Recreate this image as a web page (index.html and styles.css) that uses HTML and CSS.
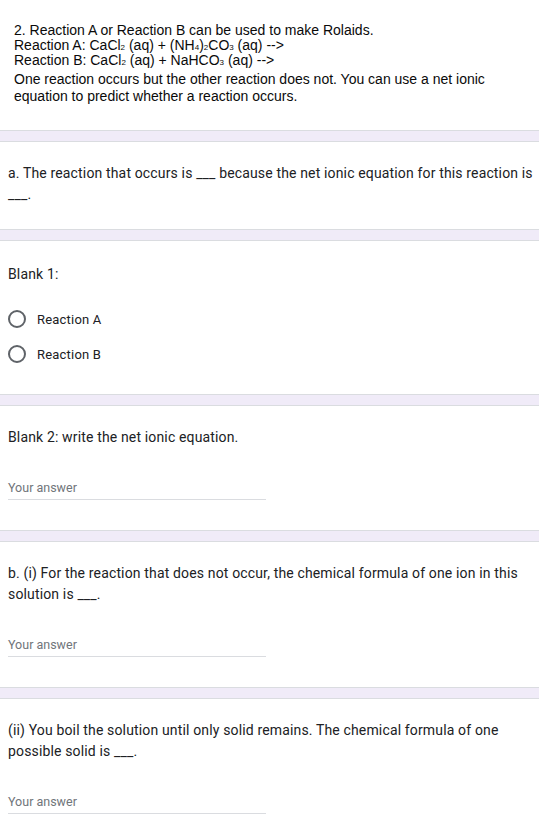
FILE: index.html
```html
<!DOCTYPE html>
<html lang="en">
<head>
<meta charset="utf-8">
<title>Reaction question</title>
<link rel="stylesheet" href="styles.css">
</head>
<body>
<div class="image-block">
  <div class="eqs">
    <div>2. Reaction A or Reaction B can be used to make Rolaids.</div>
    <div>Reaction A: CaCl<sub>2</sub> (aq) + (NH<sub>4</sub>)<sub>2</sub>CO<sub>3</sub> (aq) --&gt;</div>
    <div>Reaction B: CaCl<sub>2</sub> (aq) + NaHCO<sub>3</sub> (aq) --&gt;</div>
  </div>
  <p class="note">One reaction occurs but the other reaction does not. You can use a net ionic equation to predict whether a reaction occurs.</p>
</div>
<div class="sep"></div>
<div class="card">
  <div class="q">a. The reaction that occurs is ___ because the net ionic equation for this reaction is ___.</div>
</div>
<div class="sep"></div>
<div class="card card-radio">
  <div class="q">Blank 1:</div>
  <div class="options">
    <label class="opt"><span class="radio"></span><span class="opt-label">Reaction A</span></label>
    <label class="opt"><span class="radio"></span><span class="opt-label">Reaction B</span></label>
  </div>
</div>
<div class="sep"></div>
<div class="card">
  <div class="q">Blank 2: write the net ionic equation.</div>
  <div class="answer">Your answer</div>
</div>
<div class="sep"></div>
<div class="card">
  <div class="q">b. (i) For the reaction that does not occur, the chemical formula of one ion in this solution is ___.</div>
  <div class="answer">Your answer</div>
</div>
<div class="sep"></div>
<div class="card">
  <div class="q">(ii) You boil the solution until only solid remains. The chemical formula of one possible solid is ___.</div>
  <div class="answer">Your answer</div>
</div>
</body>
</html>
```
FILE: styles.css
```css
html, body {
  margin: 0;
  padding: 0;
  background: #ffffff;
}
body {
  font-family: Roboto, "Liberation Sans", Arial, sans-serif;
  color: #202124;
}
.image-block {
  height: 130px;
  box-sizing: border-box;
  padding: 23px 14px 0 14px;
  font-family: "Liberation Sans", Arial, sans-serif;
  font-size: 14px;
  color: #0a0a0a;
}
.eqs {
  line-height: 15px;
}
.eqs sub {
  font-size: 8px;
  vertical-align: 0;
  line-height: 0;
}
.note {
  margin: 3px 0 0 0;
  line-height: 17px;
}
.sep {
  height: 10px;
  background: #f0ebf8;
  border-top: 1px solid #dadce0;
  border-bottom: 1px solid #dadce0;
}
.card {
  padding: 21px 2px 24px 8px;
}
.q {
  font-size: 14px;
  line-height: 21px;
  letter-spacing: 0.15px;
}
.card-radio {
  padding-top: 23px;
  padding-bottom: 31px;
}
.options {
  display: flex;
  flex-direction: column;
  gap: 17px;
  margin-top: 25px;
}
.opt {
  display: flex;
  align-items: center;
  gap: 11px;
  height: 18px;
}
.radio {
  width: 18px;
  height: 18px;
  box-sizing: border-box;
  border: 2px solid #5f6368;
  border-radius: 50%;
}
.opt-label {
  font-size: 13px;
  letter-spacing: 0.2px;
}
.answer {
  margin-top: 30px;
  width: 258px;
  height: 21px;
  line-height: 20px;
  font-size: 12.5px;
  color: #70757a;
  border-bottom: 1px solid #dadce0;
  margin-bottom: 6px;
}
```
